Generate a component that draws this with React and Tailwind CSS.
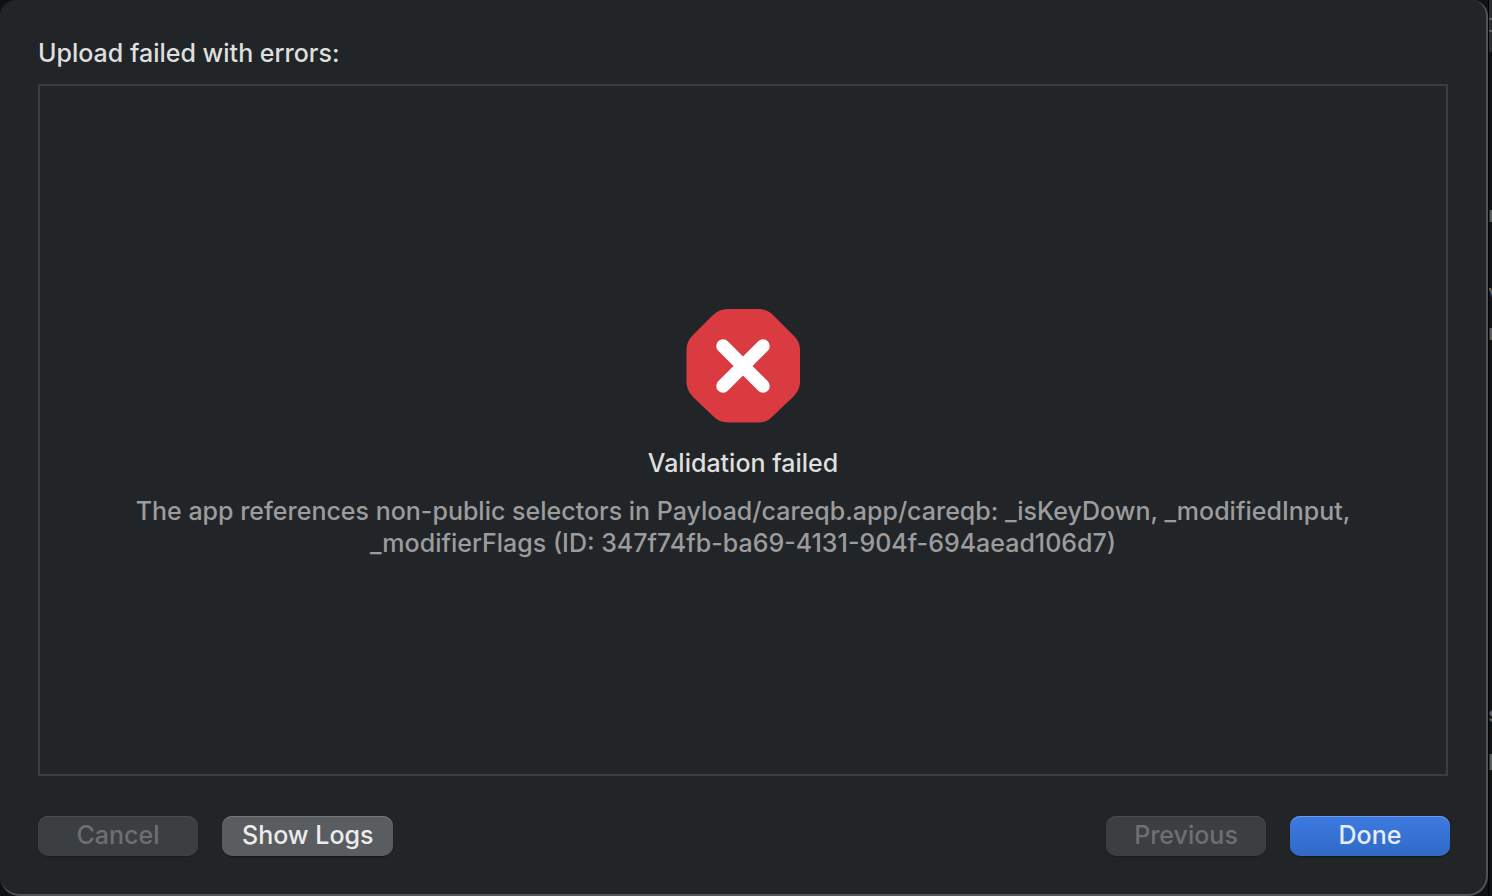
import clsx from "clsx";

const backdropLetters = [
  { id: 1, text: "r", space: "mt-[146px]" },
  { id: 2, text: "v", space: "mt-[46px]" },
  { id: 3, text: "n", space: "mt-[8px]" },
  { id: 4, text: "s", space: "mt-[350px]" },
  { id: 5, text: "l", space: "mt-[16px]" },
];

const variants = {
  secondary:
    "bg-[#5a5d60] text-[#ececec] shadow-[inset_0_1px_0_#76797b,0_1px_1px_#15171a]",
  primary:
    "bg-linear-to-b from-[#3d7be2] to-[#3169c6] text-[#e6eefb] shadow-[inset_0_1px_0_#6c9ceb,0_1px_1px_#15171a]",
  disabled:
    "bg-[#3c3f41] text-[#6d6f71] shadow-[inset_0_1px_0_#4a4d4f,0_1px_1px_#1a1d1f]",
};

function DialogButton({ variant = "secondary", className, children, ...props }) {
  return (
    <button
      type="button"
      disabled={variant === "disabled"}
      className={clsx(
        "h-10 rounded-[10px] pb-[2px] text-[25px] leading-8 font-medium",
        variants[variant],
        className
      )}
      {...props}
    >
      {children}
    </button>
  );
}

function StopIcon() {
  return (
    <svg viewBox="0 0 114 114" className="size-[114px]" aria-hidden="true">
      <path
        d="M42 0H73Q81 0 87 6L107 26Q114 32 114 41V73Q114 81 107 88L87 107Q81 113.500 73 113.500H42Q33 113.500 27 107L7 88Q.5 81 .5 73V41Q.5 32 7 26L27 6Q33 0 42 0Z"
        fill="#da3b41"
      />
      <path
        d="M37 37L77 77M77 37L37 77"
        stroke="#fff"
        strokeWidth="13.5"
        strokeLinecap="round"
      />
    </svg>
  );
}

export default function App() {
  return (
    <div className="flex min-h-screen bg-[#101112] font-['Inter','Liberation_Sans',sans-serif] font-medium">
      <main
        role="dialog"
        aria-labelledby="dialog-title"
        className="flex min-w-0 flex-1 flex-col rounded-t-[16px] rounded-b-[20px] border-r-2 border-b-2 border-[#505355] bg-[#222527] pt-[37px] pr-9 pb-[38px] pl-[38px]"
      >
        <h1 id="dialog-title" className="text-[25px] leading-8 text-[#dedfdf]">
          Upload failed with errors:
        </h1>

        <section className="mt-[15px] mr-[2px] flex flex-1 flex-col items-center justify-center border-2 border-[#3a3c3f] px-20 pt-2 text-center">
          <StopIcon />
          <h2 className="mt-6 text-[25px] leading-8 text-[#dedfdf]">Validation failed</h2>
          <p className="mt-4 text-[25px] leading-8 text-[#9b9c9d]">
            The app references non-public selectors in Payload/careqb.app/careqb: _isKeyDown, _modifiedInput,
            _modifierFlags (ID: 347f74fb-ba69-4131-904f-694aead106d7)
          </p>
        </section>

        <footer className="mt-10 flex gap-6">
          <DialogButton variant="disabled" className="w-40">Cancel</DialogButton>
          <DialogButton className="px-5">Show Logs</DialogButton>
          <DialogButton variant="disabled" className="ml-auto w-40">Previous</DialogButton>
          <DialogButton variant="primary" className="w-40">Done</DialogButton>
        </footer>
      </main>

      {/* sliver of the window behind the dialog */}
      <div
        aria-hidden="true"
        className="flex w-1 flex-col overflow-hidden border-l border-black text-[22px] leading-8 text-[#5c5e60]"
      >
        <div className="h-[52px] shrink-0 bg-[#2b2c2d] pt-[18px]">
          <div className="h-[2px] bg-[#5c5e60]" />
          <div className="mt-[10px] h-[2px] bg-[#5c5e60]" />
        </div>
        {backdropLetters.map(({ id, text, space }) => (
          <span key={id} className={clsx("-ml-px", space)}>{text}</span>
        ))}
      </div>
    </div>
  );
}
